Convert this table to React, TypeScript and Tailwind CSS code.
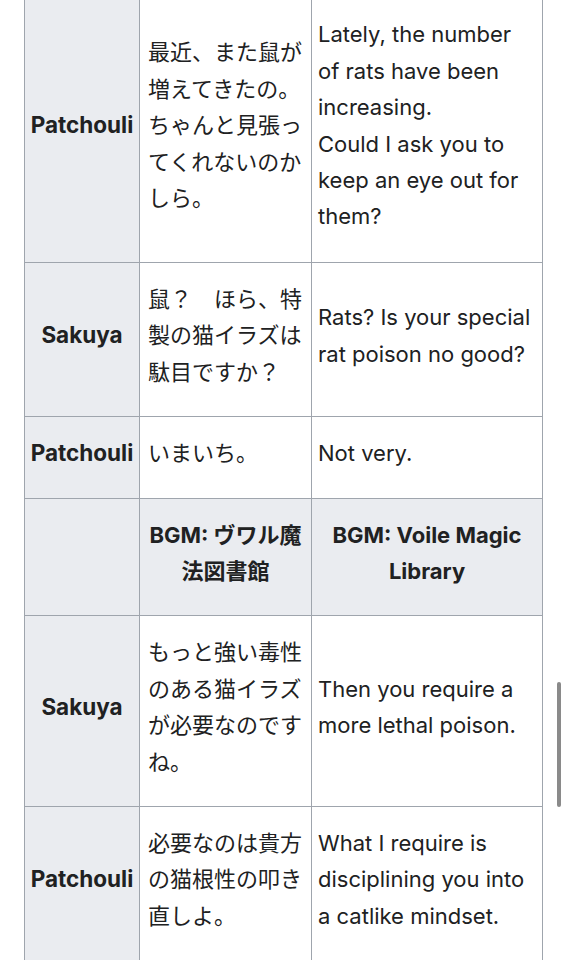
import React from "react"

type Line = {
    speaker?: string;
    ja: string;
    en: string[];
    heading?: boolean;
    tall?: boolean;
}

const lines: Line[] = [
    {
        speaker: "Patchouli",
        ja: "最近、また鼠が増えてきたの。ちゃんと見張ってくれないのかしら。",
        en: [
            "Lately, the number",
            "of rats have been",
            "increasing.",
            "Could I ask you to",
            "keep an eye out for",
            "them?",
        ],
        tall: true,
    },
    {
        speaker: "Sakuya",
        ja: "鼠？　ほら、特製の猫イラズは駄目ですか？",
        en: ["Rats? Is your special", "rat poison no good?"],
    },
    { speaker: "Patchouli", ja: "いまいち。", en: ["Not very."] },
    { heading: true, ja: "BGM: ヴワル魔法図書館", en: ["BGM: Voile Magic", "Library"] },
    {
        speaker: "Sakuya",
        ja: "もっと強い毒性のある猫イラズが必要なのですね。",
        en: ["Then you require a", "more lethal poison."],
    },
    {
        speaker: "Patchouli",
        ja: "必要なのは貴方の猫根性の叩き直しよ。",
        en: ["What I require is", "disciplining you into", "a catlike mindset."],
    },
]

const cell = "border border-[#9fa5ad] pt-[18px] pb-[26px] align-middle"

const English = ({ en }: { en: string[] }) => (
    <>
        {en.map((t, i) => (
            <React.Fragment key={i}>
                {i > 0 && <br />}
                {t}
            </React.Fragment>
        ))}
    </>
)

const App = () => {
    return (
        <div
            className="relative h-[960px] overflow-hidden bg-white text-[22px] leading-[36.4px] text-[#202122]"
            style={{ fontFamily: '"Inter", "Noto Sans CJK JP", sans-serif' }}
        >
            <table className="-mt-[4px] ml-6 table-fixed border-collapse">
                <colgroup>
                    <col className="w-[115px]" />
                    <col className="w-[172px]" />
                    <col className="w-[231px]" />
                </colgroup>
                <tbody>
                    {lines.map((line, i) => (
                        <tr
                            key={i}
                            className={`${line.heading ? "bg-[#eaecf0]" : ""} ${line.tall ? "h-[266px]" : ""}`}
                        >
                            <th className={`${cell} bg-[#eaecf0] px-1 text-center text-[22.5px] font-bold`}>
                                {line.speaker}
                            </th>
                            {line.heading ? (
                                <>
                                    <th className={`${cell} px-2 text-center font-bold`}>{line.ja}</th>
                                    <th className={`${cell} whitespace-nowrap px-1 text-center font-bold`}>
                                        <English en={line.en} />
                                    </th>
                                </>
                            ) : (
                                <>
                                    <td className={`${cell} px-2`}>{line.ja}</td>
                                    <td className={`${cell} whitespace-nowrap px-[6px]`}>
                                        <English en={line.en} />
                                    </td>
                                </>
                            )}
                        </tr>
                    ))}
                </tbody>
            </table>

            {/* scroll indicator */}
            <div className="absolute left-[557px] top-[682px] h-[125px] w-[4px] rounded-full bg-[#8a8a8a]" />
        </div>
    )
}

export default App
